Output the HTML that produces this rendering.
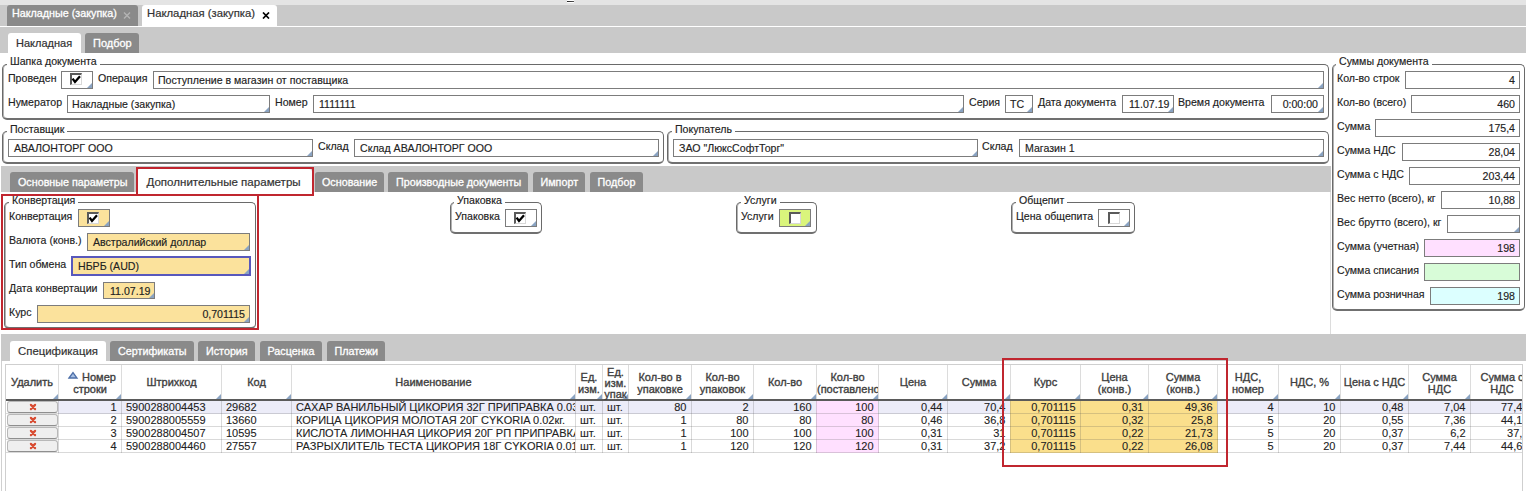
<!DOCTYPE html><html><head><meta charset="utf-8"><style>
html,body{margin:0;padding:0;background:#fff;}
body{width:1526px;height:491px;position:relative;overflow:hidden;font-family:"Liberation Sans",sans-serif;font-size:10.6px;color:#222;}
div,span,i{position:absolute;box-sizing:border-box;}
.t{white-space:nowrap;line-height:12px;-webkit-text-stroke:0.15px currentColor;}
.gt{white-space:nowrap;line-height:12px;background:#fff;color:#222;-webkit-text-stroke:0.15px currentColor;}
.grp{border:1px solid #6a6a6a;border-bottom:2px solid #707070;border-radius:5px;box-shadow:inset 1px 0 0 rgba(0,0,0,0.3);}
.inp{border:1px solid #7c7c7c;background:#fff;overflow:hidden;}
.it{white-space:nowrap;line-height:12px;top:2px;-webkit-text-stroke:0.15px currentColor;}
.tri{width:0;height:0;right:0;bottom:0;border-style:solid;border-width:0 0 5px 5px;border-color:transparent transparent #8aa3c2 transparent;}
.cbi{width:12px;height:12px;background:#fff;border-style:solid;border-width:2px 1px 1px 2px;border-color:#5a5a5a #d8d8d8 #d8d8d8 #5a5a5a;}
.cbi svg{left:-2px!important;top:-2px!important;}
.tabd{background:#8a8a8a;border-radius:3px 3px 0 0;}
.tabw{background:#fff;border-radius:3px 3px 0 0;}
.bar{background:#c9c9c9;}
.red{border:2px solid #c0262f;}
.tbl{font-size:11px;color:#222;}
.c{white-space:nowrap;line-height:12px;overflow:hidden;font-size:11px;-webkit-text-stroke:0.1px currentColor;}
.btn{background:#efefef;border:1px solid #b8b8b8;border-bottom:1px solid #8f8f8f;border-radius:3px;}
</style></head><body>

<div class="" style="left:0px;top:0px;width:1526px;height:5px;background:#e4e4e4;"></div>
<div class="" style="left:567px;top:0px;width:7px;height:1px;background:#fff;"></div>
<div class="" style="left:567px;top:1px;width:7px;height:1px;background:linear-gradient(90deg,#222,#555);"></div>
<div class="" style="left:567px;top:2px;width:7px;height:1px;background:#fff;"></div>
<div class="bar" style="left:0px;top:5px;width:1526px;height:21px;"></div>
<div class="" style="left:0px;top:26px;width:1526px;height:1px;background:#fff;"></div>
<div class="bar" style="left:0px;top:27px;width:1526px;height:26px;"></div>
<div class="tabd" style="left:7px;top:5px;width:131px;height:21px;"></div>
<div class="t" style="left:12px;top:7px;font-size:10.75px;color:#ffffff;-webkit-text-stroke:0.3px currentColor;">Накладные (закупка)</div>
<svg style="position:absolute;left:123px;top:12px" width="8" height="7"><path d="M1 0.5 L7 6.5 M7 0.5 L1 6.5" stroke="#b4b4b4" stroke-width="1.4"/></svg>
<div class="tabw" style="left:142px;top:5px;width:135px;height:21px;"></div>
<div class="t" style="left:147px;top:7px;font-size:11.3px;color:#333;-webkit-text-stroke:0.2px currentColor;">Накладная (закупка)</div>
<svg style="position:absolute;left:262px;top:12px" width="8" height="7"><path d="M1 0.5 L7 6.5 M7 0.5 L1 6.5" stroke="#000" stroke-width="1.7"/></svg>
<div class="tabw" style="left:8px;top:33px;width:73px;height:20px;"></div>
<div class="t" style="left:16px;top:37px;font-size:11px;color:#333;-webkit-text-stroke:0.2px currentColor;">Накладная</div>
<div class="tabd" style="left:85px;top:33px;width:54px;height:20px;"></div>
<div class="t" style="left:93px;top:37px;font-size:11px;color:#ffffff;-webkit-text-stroke:0.3px currentColor;">Подбор</div>
<div class="" style="left:1330px;top:192px;width:1px;height:142px;background:#dcdcdc;"></div>
<div class="grp" style="left:2px;top:64px;width:1327px;height:56px;"></div>
<div class="gt" style="left:7px;top:55px;padding:0 3px;">Шапка документа</div>
<div class="t" style="left:8px;top:72px;">Проведен</div>
<div class="inp" style="left:61px;top:71px;width:32px;height:18px;"><span class="cbi" style="left:8px;top:1px"><svg width="12" height="12" style="position:absolute;left:0;top:0"><path d="M2.6 5.6 L5 9 L10 3.2" stroke="#000" stroke-width="2.3" fill="none"/></svg></span><i class="tri"></i></div>
<div class="t" style="left:98px;top:72px;">Операция</div>
<div class="inp" style="left:153px;top:71px;width:1171px;height:18px;"><span class="it" style="text-align:left;left:4px;">Поступление в магазин от поставщика</span><i class="tri"></i></div>
<div class="t" style="left:8px;top:96px;">Нумератор</div>
<div class="inp" style="left:67px;top:95px;width:203px;height:18px;"><span class="it" style="text-align:left;left:4px;">Накладные (закупка)</span><i class="tri"></i></div>
<div class="t" style="left:275px;top:96px;">Номер</div>
<div class="inp" style="left:313px;top:95px;width:651px;height:18px;"><span class="it" style="text-align:left;left:5px;">1111111</span><i class="tri"></i></div>
<div class="t" style="left:969px;top:96px;">Серия</div>
<div class="inp" style="left:1005px;top:95px;width:28px;height:18px;"><span class="it" style="text-align:left;left:4px;">ТС</span><i class="tri"></i></div>
<div class="t" style="left:1038px;top:96px;">Дата документа</div>
<div class="inp" style="left:1122px;top:95px;width:52px;height:18px;"><span class="it" style="text-align:left;left:6px;">11.07.19</span><i class="tri"></i></div>
<div class="t" style="left:1178px;top:96px;">Время документа</div>
<div class="inp" style="left:1271px;top:95px;width:53px;height:18px;"><span class="it" style="text-align:right;right:5px;left:auto;">0:00:00</span><i class="tri"></i></div>
<div class="grp" style="left:2px;top:131px;width:662px;height:33px;"></div>
<div class="gt" style="left:7px;top:123px;padding:0 3px;">Поставщик</div>
<div class="inp" style="left:8px;top:139px;width:305px;height:18px;"><span class="it" style="text-align:left;left:5px;">АВАЛОНТОРГ ООО</span><i class="tri"></i></div>
<div class="t" style="left:318px;top:140px;">Склад</div>
<div class="inp" style="left:354px;top:139px;width:305px;height:18px;"><span class="it" style="text-align:left;left:5px;">Склад АВАЛОНТОРГ ООО</span><i class="tri"></i></div>
<div class="grp" style="left:667px;top:131px;width:662px;height:33px;"></div>
<div class="gt" style="left:672px;top:123px;padding:0 3px;">Покупатель</div>
<div class="inp" style="left:673px;top:139px;width:305px;height:18px;"><span class="it" style="text-align:left;left:5px;">ЗАО "ЛюксСофтТорг"</span><i class="tri"></i></div>
<div class="t" style="left:982px;top:140px;">Склад</div>
<div class="inp" style="left:1019px;top:139px;width:305px;height:18px;"><span class="it" style="text-align:left;left:5px;">Магазин 1</span><i class="tri"></i></div>
<div class="bar" style="left:1px;top:166px;width:1330px;height:26px;"></div>
<div class="tabd" style="left:10px;top:172px;width:124px;height:20px;"></div>
<div class="t" style="left:18px;top:176px;font-size:10.75px;color:#ffffff;-webkit-text-stroke:0.3px currentColor;">Основные параметры</div>
<div class="tabw" style="left:137px;top:169px;width:175px;height:26px;"></div>
<div class="t" style="left:146.5px;top:176px;font-size:11.55px;color:#333;-webkit-text-stroke:0.2px currentColor;">Дополнительные параметры</div>
<div class="tabd" style="left:315px;top:172px;width:69px;height:20px;"></div>
<div class="t" style="left:322px;top:176px;font-size:10.75px;color:#ffffff;-webkit-text-stroke:0.3px currentColor;">Основание</div>
<div class="tabd" style="left:388px;top:172px;width:140px;height:20px;"></div>
<div class="t" style="left:396px;top:176px;font-size:10.75px;color:#ffffff;-webkit-text-stroke:0.3px currentColor;">Производные документы</div>
<div class="tabd" style="left:532.5px;top:172px;width:52.5px;height:20px;"></div>
<div class="t" style="left:540.5px;top:176px;font-size:10.75px;color:#ffffff;-webkit-text-stroke:0.3px currentColor;">Импорт</div>
<div class="tabd" style="left:589.5px;top:172px;width:53.5px;height:20px;"></div>
<div class="t" style="left:597.5px;top:176px;font-size:10.75px;color:#ffffff;-webkit-text-stroke:0.3px currentColor;">Подбор</div>
<div class="grp" style="left:4px;top:202px;width:252px;height:127px;"></div>
<div class="gt" style="left:9px;top:194px;padding:0 3px;">Конвертация</div>
<div class="t" style="left:9px;top:210px;">Конвертация</div>
<div class="inp" style="left:78px;top:209px;width:32px;height:18px;background:#fbe29c;"><span class="cbi" style="left:8px;top:2px"><svg width="12" height="12" style="position:absolute;left:0;top:0"><path d="M2.6 5.6 L5 9 L10 3.2" stroke="#000" stroke-width="2.3" fill="none"/></svg></span><i class="tri"></i></div>
<div class="t" style="left:9px;top:234px;">Валюта (конв.)</div>
<div class="inp" style="left:87px;top:233px;width:163px;height:18px;background:#fbe29c;"><span class="it" style="text-align:left;left:5px;">Австралийский доллар</span><i class="tri"></i></div>
<div class="t" style="left:9px;top:258px;">Тип обмена</div>
<div class="inp" style="left:71px;top:256px;width:180px;height:20px;background:#fbe29c;border:2px solid #5858bc;"><span class="it" style="text-align:left;left:5px;">НБРБ (AUD)</span><i class="tri"></i></div>
<div class="t" style="left:9px;top:282px;">Дата конвертации</div>
<div class="inp" style="left:103px;top:282px;width:52px;height:17px;background:#fbe29c;"><span class="it" style="text-align:left;left:6px;">11.07.19</span><i class="tri"></i></div>
<div class="t" style="left:9px;top:306px;">Курс</div>
<div class="inp" style="left:37px;top:305px;width:213px;height:18px;background:#fbe29c;"><span class="it" style="text-align:right;right:4px;left:auto;">0,701115</span><i class="tri"></i></div>
<div class="red" style="left:1px;top:194px;width:258px;height:136px;"></div>
<div class="red" style="left:136px;top:167px;width:178px;height:29px;"></div>
<div class="grp" style="left:450px;top:202px;width:92px;height:32px;"></div>
<div class="gt" style="left:454px;top:194px;padding:0 3px;">Упаковка</div>
<div class="t" style="left:455px;top:210px;">Упаковка</div>
<div class="inp" style="left:505px;top:209px;width:32px;height:18px;"><span class="cbi" style="left:8px;top:2px"><svg width="12" height="12" style="position:absolute;left:0;top:0"><path d="M2.6 5.6 L5 9 L10 3.2" stroke="#000" stroke-width="2.3" fill="none"/></svg></span><i class="tri"></i></div>
<div class="grp" style="left:736px;top:202px;width:81px;height:32px;"></div>
<div class="gt" style="left:741px;top:194px;padding:0 3px;">Услуги</div>
<div class="t" style="left:741px;top:210px;">Услуги</div>
<div class="inp" style="left:779px;top:209px;width:32px;height:18px;background:#daf57c;"><span class="cbi" style="left:9px;top:2px"></span><i class="tri"></i></div>
<div class="grp" style="left:1011px;top:202px;width:124px;height:32px;"></div>
<div class="gt" style="left:1016px;top:194px;padding:0 3px;">Общепит</div>
<div class="t" style="left:1016px;top:210px;">Цена общепита</div>
<div class="inp" style="left:1098px;top:209px;width:32px;height:18px;"><span class="cbi" style="left:9px;top:2px"></span><i class="tri"></i></div>
<div class="grp" style="left:1332px;top:64px;width:193px;height:247px;"></div>
<div class="gt" style="left:1336px;top:55px;padding:0 3px;">Суммы документа</div>
<div class="t" style="left:1337px;top:72px;">Кол-во строк</div>
<div class="inp" style="left:1405px;top:71px;width:115px;height:18px;"><span class="it" style="text-align:right;right:4px;left:auto;">4</span></div>
<div class="t" style="left:1337px;top:96px;">Кол-во (всего)</div>
<div class="inp" style="left:1411px;top:95px;width:109px;height:18px;"><span class="it" style="text-align:right;right:4px;left:auto;">460</span></div>
<div class="t" style="left:1337px;top:120px;">Сумма</div>
<div class="inp" style="left:1375px;top:119px;width:145px;height:18px;"><span class="it" style="text-align:right;right:4px;left:auto;">175,4</span></div>
<div class="t" style="left:1337px;top:144px;">Сумма НДС</div>
<div class="inp" style="left:1402px;top:143px;width:118px;height:18px;"><span class="it" style="text-align:right;right:4px;left:auto;">28,04</span></div>
<div class="t" style="left:1337px;top:168px;">Сумма с НДС</div>
<div class="inp" style="left:1409px;top:167px;width:111px;height:18px;"><span class="it" style="text-align:right;right:4px;left:auto;">203,44</span></div>
<div class="t" style="left:1337px;top:192px;">Вес нетто (всего), кг</div>
<div class="inp" style="left:1441px;top:191px;width:79px;height:18px;"><span class="it" style="text-align:right;right:4px;left:auto;">10,88</span></div>
<div class="t" style="left:1337px;top:216px;">Вес брутто (всего), кг</div>
<div class="inp" style="left:1447px;top:215px;width:73px;height:18px;"><i class="tri"></i></div>
<div class="t" style="left:1337px;top:240px;">Сумма (учетная)</div>
<div class="inp" style="left:1424px;top:239px;width:96px;height:18px;background:#ffe0ff;"><span class="it" style="text-align:right;right:4px;left:auto;">198</span></div>
<div class="t" style="left:1337px;top:264px;">Сумма списания</div>
<div class="inp" style="left:1424px;top:263px;width:96px;height:18px;background:#d8fcd8;"></div>
<div class="t" style="left:1337px;top:288px;">Сумма розничная</div>
<div class="inp" style="left:1430px;top:287px;width:90px;height:18px;background:#dcffff;"><span class="it" style="text-align:right;right:4px;left:auto;">198</span></div>
<div class="bar" style="left:1px;top:334px;width:1525px;height:27px;"></div>
<div class="tabw" style="left:10px;top:341px;width:96px;height:20px;"></div>
<div class="t" style="left:18px;top:345px;font-size:11.4px;color:#333;-webkit-text-stroke:0.2px currentColor;">Спецификация</div>
<div class="tabd" style="left:110px;top:341px;width:84px;height:20px;"></div>
<div class="t" style="left:118px;top:345px;font-size:10.75px;color:#ffffff;-webkit-text-stroke:0.3px currentColor;">Сертификаты</div>
<div class="tabd" style="left:198px;top:341px;width:57px;height:20px;"></div>
<div class="t" style="left:206px;top:345px;font-size:10.75px;color:#ffffff;-webkit-text-stroke:0.3px currentColor;">История</div>
<div class="tabd" style="left:259.5px;top:341px;width:62.5px;height:20px;"></div>
<div class="t" style="left:267.5px;top:345px;font-size:10.75px;color:#ffffff;-webkit-text-stroke:0.3px currentColor;">Расценка</div>
<div class="tabd" style="left:326.5px;top:341px;width:58.5px;height:20px;"></div>
<div class="t" style="left:334.5px;top:345px;font-size:10.75px;color:#ffffff;-webkit-text-stroke:0.3px currentColor;">Платежи</div>
<div class="" style="left:1px;top:361px;width:1px;height:130px;background:#d0d0d0;"></div>
<div style="left:5px;top:364px;width:1518px;height:127px;overflow:hidden;border:1px solid #cfcfcf;border-bottom:none;background:#fff;">
<div style="left:52px;top:36px;width:64px;height:13px;background:#ececf8;"></div>
<div style="left:115px;top:36px;width:101px;height:13px;background:#ececf8;"></div>
<div style="left:215px;top:36px;width:71px;height:13px;background:#ececf8;"></div>
<div style="left:285px;top:36px;width:285px;height:13px;background:#ececf8;"></div>
<div style="left:569px;top:36px;width:28px;height:13px;background:#ececf8;"></div>
<div style="left:596px;top:36px;width:27px;height:13px;background:#ececf8;"></div>
<div style="left:622px;top:36px;width:64px;height:13px;background:#ececf8;"></div>
<div style="left:685px;top:36px;width:63px;height:13px;background:#ececf8;"></div>
<div style="left:747px;top:36px;width:64px;height:13px;background:#ececf8;"></div>
<div style="left:810px;top:36px;width:63px;height:13px;background:#ffe0ff;"></div>
<div style="left:872px;top:36px;width:70px;height:13px;background:#ececf8;"></div>
<div style="left:941px;top:36px;width:64px;height:13px;background:#ececf8;"></div>
<div style="left:1004px;top:36px;width:71px;height:13px;background:#fadf8c;"></div>
<div style="left:1074px;top:36px;width:69px;height:13px;background:#fadf8c;"></div>
<div style="left:1142px;top:36px;width:70px;height:13px;background:#fadf8c;"></div>
<div style="left:1211px;top:36px;width:62px;height:13px;background:#ececf8;"></div>
<div style="left:1272px;top:36px;width:63px;height:13px;background:#ececf8;"></div>
<div style="left:1334px;top:36px;width:69px;height:13px;background:#ececf8;"></div>
<div style="left:1402px;top:36px;width:63px;height:13px;background:#ececf8;"></div>
<div style="left:1464px;top:36px;width:64px;height:13px;background:#ececf8;"></div>
<div style="left:810px;top:49px;width:63px;height:13px;background:#ffe0ff;"></div>
<div style="left:1004px;top:49px;width:71px;height:13px;background:#fadf8c;"></div>
<div style="left:1074px;top:49px;width:69px;height:13px;background:#fadf8c;"></div>
<div style="left:1142px;top:49px;width:70px;height:13px;background:#fadf8c;"></div>
<div style="left:810px;top:62px;width:63px;height:13px;background:#ffe0ff;"></div>
<div style="left:1004px;top:62px;width:71px;height:13px;background:#fadf8c;"></div>
<div style="left:1074px;top:62px;width:69px;height:13px;background:#fadf8c;"></div>
<div style="left:1142px;top:62px;width:70px;height:13px;background:#fadf8c;"></div>
<div style="left:810px;top:75px;width:63px;height:13px;background:#ffe0ff;"></div>
<div style="left:1004px;top:75px;width:71px;height:13px;background:#fadf8c;"></div>
<div style="left:1074px;top:75px;width:69px;height:13px;background:#fadf8c;"></div>
<div style="left:1142px;top:75px;width:70px;height:13px;background:#fadf8c;"></div>
<div style="left:52px;top:0px;width:1px;height:34px;background:#dcdcdc;"></div>
<div style="left:52px;top:36px;width:1px;height:52px;background:rgba(80,80,80,0.22);"></div>
<div style="left:115px;top:0px;width:1px;height:34px;background:#dcdcdc;"></div>
<div style="left:115px;top:36px;width:1px;height:52px;background:rgba(80,80,80,0.22);"></div>
<div style="left:215px;top:0px;width:1px;height:34px;background:#dcdcdc;"></div>
<div style="left:215px;top:36px;width:1px;height:52px;background:rgba(80,80,80,0.22);"></div>
<div style="left:285px;top:0px;width:1px;height:34px;background:#dcdcdc;"></div>
<div style="left:285px;top:36px;width:1px;height:52px;background:rgba(80,80,80,0.22);"></div>
<div style="left:569px;top:0px;width:1px;height:34px;background:#dcdcdc;"></div>
<div style="left:569px;top:36px;width:1px;height:52px;background:rgba(80,80,80,0.22);"></div>
<div style="left:596px;top:0px;width:1px;height:34px;background:#dcdcdc;"></div>
<div style="left:596px;top:36px;width:1px;height:52px;background:rgba(80,80,80,0.22);"></div>
<div style="left:622px;top:0px;width:1px;height:34px;background:#dcdcdc;"></div>
<div style="left:622px;top:36px;width:1px;height:52px;background:rgba(80,80,80,0.22);"></div>
<div style="left:685px;top:0px;width:1px;height:34px;background:#dcdcdc;"></div>
<div style="left:685px;top:36px;width:1px;height:52px;background:rgba(80,80,80,0.22);"></div>
<div style="left:747px;top:0px;width:1px;height:34px;background:#dcdcdc;"></div>
<div style="left:747px;top:36px;width:1px;height:52px;background:rgba(80,80,80,0.22);"></div>
<div style="left:810px;top:0px;width:1px;height:34px;background:#dcdcdc;"></div>
<div style="left:810px;top:36px;width:1px;height:52px;background:rgba(80,80,80,0.22);"></div>
<div style="left:872px;top:0px;width:1px;height:34px;background:#dcdcdc;"></div>
<div style="left:872px;top:36px;width:1px;height:52px;background:rgba(80,80,80,0.22);"></div>
<div style="left:941px;top:0px;width:1px;height:34px;background:#dcdcdc;"></div>
<div style="left:941px;top:36px;width:1px;height:52px;background:rgba(80,80,80,0.22);"></div>
<div style="left:1004px;top:0px;width:1px;height:34px;background:#dcdcdc;"></div>
<div style="left:1004px;top:36px;width:1px;height:52px;background:rgba(80,80,80,0.22);"></div>
<div style="left:1074px;top:0px;width:1px;height:34px;background:#dcdcdc;"></div>
<div style="left:1074px;top:36px;width:1px;height:52px;background:rgba(80,80,80,0.22);"></div>
<div style="left:1142px;top:0px;width:1px;height:34px;background:#dcdcdc;"></div>
<div style="left:1142px;top:36px;width:1px;height:52px;background:rgba(80,80,80,0.22);"></div>
<div style="left:1211px;top:0px;width:1px;height:34px;background:#dcdcdc;"></div>
<div style="left:1211px;top:36px;width:1px;height:52px;background:rgba(80,80,80,0.22);"></div>
<div style="left:1272px;top:0px;width:1px;height:34px;background:#dcdcdc;"></div>
<div style="left:1272px;top:36px;width:1px;height:52px;background:rgba(80,80,80,0.22);"></div>
<div style="left:1334px;top:0px;width:1px;height:34px;background:#dcdcdc;"></div>
<div style="left:1334px;top:36px;width:1px;height:52px;background:rgba(80,80,80,0.22);"></div>
<div style="left:1402px;top:0px;width:1px;height:34px;background:#dcdcdc;"></div>
<div style="left:1402px;top:36px;width:1px;height:52px;background:rgba(80,80,80,0.22);"></div>
<div style="left:1464px;top:0px;width:1px;height:34px;background:#dcdcdc;"></div>
<div style="left:1464px;top:36px;width:1px;height:52px;background:rgba(80,80,80,0.22);"></div>
<div style="left:0px;top:48px;width:1530px;height:1px;background:rgba(80,80,80,0.22);"></div>
<div style="left:0px;top:61px;width:1530px;height:1px;background:rgba(80,80,80,0.22);"></div>
<div style="left:0px;top:74px;width:1530px;height:1px;background:rgba(80,80,80,0.22);"></div>
<div style="left:0px;top:87px;width:1530px;height:1px;background:rgba(80,80,80,0.22);"></div>
<div style="left:0px;top:34px;width:1530px;height:2px;background:#5a5a5a;"></div>
<i class="tri" style="left:47px;top:29px;right:auto;bottom:auto;"></i>
<i class="tri" style="left:110px;top:29px;right:auto;bottom:auto;"></i>
<i class="tri" style="left:210px;top:29px;right:auto;bottom:auto;"></i>
<i class="tri" style="left:280px;top:29px;right:auto;bottom:auto;"></i>
<i class="tri" style="left:564px;top:29px;right:auto;bottom:auto;"></i>
<i class="tri" style="left:591px;top:29px;right:auto;bottom:auto;"></i>
<i class="tri" style="left:617px;top:29px;right:auto;bottom:auto;"></i>
<i class="tri" style="left:680px;top:29px;right:auto;bottom:auto;"></i>
<i class="tri" style="left:742px;top:29px;right:auto;bottom:auto;"></i>
<i class="tri" style="left:805px;top:29px;right:auto;bottom:auto;"></i>
<i class="tri" style="left:867px;top:29px;right:auto;bottom:auto;"></i>
<i class="tri" style="left:936px;top:29px;right:auto;bottom:auto;"></i>
<i class="tri" style="left:999px;top:29px;right:auto;bottom:auto;"></i>
<i class="tri" style="left:1069px;top:29px;right:auto;bottom:auto;"></i>
<i class="tri" style="left:1137px;top:29px;right:auto;bottom:auto;"></i>
<i class="tri" style="left:1206px;top:29px;right:auto;bottom:auto;"></i>
<i class="tri" style="left:1267px;top:29px;right:auto;bottom:auto;"></i>
<i class="tri" style="left:1329px;top:29px;right:auto;bottom:auto;"></i>
<i class="tri" style="left:1397px;top:29px;right:auto;bottom:auto;"></i>
<i class="tri" style="left:1459px;top:29px;right:auto;bottom:auto;"></i>
<i class="tri" style="left:1522px;top:29px;right:auto;bottom:auto;"></i>
<div class="c" style="left:0px;top:11px;width:52px;text-align:center;color:#404040;-webkit-text-stroke:0.35px currentColor;">Удалить</div>
<div class="c" style="left:53px;top:6px;width:62px;text-align:center;color:#404040;-webkit-text-stroke:0.35px currentColor;"><svg width="10" height="8" style="position:relative;top:-2px;margin-right:4px;margin-left:4px;overflow:visible"><path d="M1 7 L5 1.5 L9 7 Z" fill="#a8c0e4" stroke="#4d6fa8" stroke-width="1.3"/></svg>Номер</div>
<div class="c" style="left:53px;top:18px;width:62px;text-align:center;color:#404040;-webkit-text-stroke:0.35px currentColor;">строки</div>
<div class="c" style="left:116px;top:11px;width:99px;text-align:center;color:#404040;-webkit-text-stroke:0.35px currentColor;">Штрихкод</div>
<div class="c" style="left:216px;top:11px;width:69px;text-align:center;color:#404040;-webkit-text-stroke:0.35px currentColor;">Код</div>
<div class="c" style="left:286px;top:11px;width:283px;text-align:center;color:#404040;-webkit-text-stroke:0.35px currentColor;">Наименование</div>
<div class="c" style="left:570px;top:6px;width:26px;text-align:center;color:#404040;-webkit-text-stroke:0.35px currentColor;">Ед.</div>
<div class="c" style="left:570px;top:18px;width:26px;text-align:center;color:#404040;-webkit-text-stroke:0.35px currentColor;">изм.</div>
<div class="c" style="left:597px;top:1px;width:25px;text-align:center;color:#404040;-webkit-text-stroke:0.35px currentColor;">Ед.</div>
<div class="c" style="left:597px;top:12px;width:25px;text-align:center;color:#404040;-webkit-text-stroke:0.35px currentColor;">изм.</div>
<div class="c" style="left:597px;top:23px;width:25px;text-align:center;color:#404040;-webkit-text-stroke:0.35px currentColor;">упак</div>
<div class="c" style="left:623px;top:6px;width:62px;text-align:center;color:#404040;-webkit-text-stroke:0.35px currentColor;">Кол-во в</div>
<div class="c" style="left:623px;top:18px;width:62px;text-align:center;color:#404040;-webkit-text-stroke:0.35px currentColor;">упаковке</div>
<div class="c" style="left:686px;top:6px;width:61px;text-align:center;color:#404040;-webkit-text-stroke:0.35px currentColor;">Кол-во</div>
<div class="c" style="left:686px;top:18px;width:61px;text-align:center;color:#404040;-webkit-text-stroke:0.35px currentColor;">упаковок</div>
<div class="c" style="left:748px;top:11px;width:62px;text-align:center;color:#404040;-webkit-text-stroke:0.35px currentColor;">Кол-во</div>
<div class="c" style="left:811px;top:6px;width:61px;text-align:center;color:#404040;-webkit-text-stroke:0.35px currentColor;">Кол-во</div>
<div class="c" style="left:811px;top:18px;width:61px;text-align:center;color:#404040;-webkit-text-stroke:0.35px currentColor;">(поставлено)</div>
<div class="c" style="left:873px;top:11px;width:68px;text-align:center;color:#404040;-webkit-text-stroke:0.35px currentColor;">Цена</div>
<div class="c" style="left:942px;top:11px;width:62px;text-align:center;color:#404040;-webkit-text-stroke:0.35px currentColor;">Сумма</div>
<div class="c" style="left:1005px;top:11px;width:69px;text-align:center;color:#404040;-webkit-text-stroke:0.35px currentColor;">Курс</div>
<div class="c" style="left:1075px;top:6px;width:67px;text-align:center;color:#404040;-webkit-text-stroke:0.35px currentColor;">Цена</div>
<div class="c" style="left:1075px;top:18px;width:67px;text-align:center;color:#404040;-webkit-text-stroke:0.35px currentColor;">(конв.)</div>
<div class="c" style="left:1143px;top:6px;width:68px;text-align:center;color:#404040;-webkit-text-stroke:0.35px currentColor;">Сумма</div>
<div class="c" style="left:1143px;top:18px;width:68px;text-align:center;color:#404040;-webkit-text-stroke:0.35px currentColor;">(конв.)</div>
<div class="c" style="left:1212px;top:6px;width:60px;text-align:center;color:#404040;-webkit-text-stroke:0.35px currentColor;">НДС,</div>
<div class="c" style="left:1212px;top:18px;width:60px;text-align:center;color:#404040;-webkit-text-stroke:0.35px currentColor;">номер</div>
<div class="c" style="left:1273px;top:11px;width:61px;text-align:center;color:#404040;-webkit-text-stroke:0.35px currentColor;">НДС, %</div>
<div class="c" style="left:1335px;top:11px;width:67px;text-align:center;color:#404040;-webkit-text-stroke:0.35px currentColor;">Цена с НДС</div>
<div class="c" style="left:1403px;top:6px;width:61px;text-align:center;color:#404040;-webkit-text-stroke:0.35px currentColor;">Сумма</div>
<div class="c" style="left:1403px;top:18px;width:61px;text-align:center;color:#404040;-webkit-text-stroke:0.35px currentColor;">НДС</div>
<div class="c" style="left:1465px;top:6px;width:62px;text-align:center;color:#404040;-webkit-text-stroke:0.35px currentColor;">Сумма с</div>
<div class="c" style="left:1465px;top:18px;width:62px;text-align:center;color:#404040;-webkit-text-stroke:0.35px currentColor;">НДС</div>
<div class="btn" style="left:1px;top:36px;width:51px;height:12px;"><svg width="8" height="8" style="position:absolute;left:20.5px;top:0.5px"><path d="M1.9 1.9 L6.1 6.1 M6.1 1.9 L1.9 6.1" stroke="#d84c32" stroke-width="2.2" stroke-linecap="round"/></svg></div>
<div class="c" style="left:52px;top:36px;width:58.5px;text-align:right;">1</div>
<div class="c" style="left:120px;top:36px;width:95px;text-align:left;">5900288004453</div>
<div class="c" style="left:220px;top:36px;width:65px;text-align:left;">29682</div>
<div class="c" style="left:290px;top:36px;width:279px;text-align:left;">САХАР ВАНИЛЬНЫЙ ЦИКОРИЯ 32Г ПРИПРАВКА 0.03кг.</div>
<div class="c" style="left:574px;top:36px;width:22px;text-align:left;">шт.</div>
<div class="c" style="left:601px;top:36px;width:21px;text-align:left;">шт.</div>
<div class="c" style="left:622px;top:36px;width:58.5px;text-align:right;">80</div>
<div class="c" style="left:685px;top:36px;width:57.5px;text-align:right;">2</div>
<div class="c" style="left:747px;top:36px;width:58.5px;text-align:right;">160</div>
<div class="c" style="left:810px;top:36px;width:57.5px;text-align:right;">100</div>
<div class="c" style="left:872px;top:36px;width:64.5px;text-align:right;">0,44</div>
<div class="c" style="left:941px;top:36px;width:58.5px;text-align:right;">70,4</div>
<div class="c" style="left:1004px;top:36px;width:65.5px;text-align:right;">0,701115</div>
<div class="c" style="left:1074px;top:36px;width:63.5px;text-align:right;">0,31</div>
<div class="c" style="left:1142px;top:36px;width:64.5px;text-align:right;">49,36</div>
<div class="c" style="left:1211px;top:36px;width:56.5px;text-align:right;">4</div>
<div class="c" style="left:1272px;top:36px;width:57.5px;text-align:right;">10</div>
<div class="c" style="left:1334px;top:36px;width:63.5px;text-align:right;">0,48</div>
<div class="c" style="left:1402px;top:36px;width:57.5px;text-align:right;">7,04</div>
<div class="c" style="left:1464px;top:36px;width:58.5px;text-align:right;">77,44</div>
<div class="btn" style="left:1px;top:49px;width:51px;height:12px;"><svg width="8" height="8" style="position:absolute;left:20.5px;top:0.5px"><path d="M1.9 1.9 L6.1 6.1 M6.1 1.9 L1.9 6.1" stroke="#d84c32" stroke-width="2.2" stroke-linecap="round"/></svg></div>
<div class="c" style="left:52px;top:49px;width:58.5px;text-align:right;">2</div>
<div class="c" style="left:120px;top:49px;width:95px;text-align:left;">5900288005559</div>
<div class="c" style="left:220px;top:49px;width:65px;text-align:left;">13660</div>
<div class="c" style="left:290px;top:49px;width:279px;text-align:left;">КОРИЦА ЦИКОРИЯ МОЛОТАЯ 20Г CYKORIA 0.02кг.</div>
<div class="c" style="left:574px;top:49px;width:22px;text-align:left;">шт.</div>
<div class="c" style="left:601px;top:49px;width:21px;text-align:left;">шт.</div>
<div class="c" style="left:622px;top:49px;width:58.5px;text-align:right;">1</div>
<div class="c" style="left:685px;top:49px;width:57.5px;text-align:right;">80</div>
<div class="c" style="left:747px;top:49px;width:58.5px;text-align:right;">80</div>
<div class="c" style="left:810px;top:49px;width:57.5px;text-align:right;">80</div>
<div class="c" style="left:872px;top:49px;width:64.5px;text-align:right;">0,46</div>
<div class="c" style="left:941px;top:49px;width:58.5px;text-align:right;">36,8</div>
<div class="c" style="left:1004px;top:49px;width:65.5px;text-align:right;">0,701115</div>
<div class="c" style="left:1074px;top:49px;width:63.5px;text-align:right;">0,32</div>
<div class="c" style="left:1142px;top:49px;width:64.5px;text-align:right;">25,8</div>
<div class="c" style="left:1211px;top:49px;width:56.5px;text-align:right;">5</div>
<div class="c" style="left:1272px;top:49px;width:57.5px;text-align:right;">20</div>
<div class="c" style="left:1334px;top:49px;width:63.5px;text-align:right;">0,55</div>
<div class="c" style="left:1402px;top:49px;width:57.5px;text-align:right;">7,36</div>
<div class="c" style="left:1464px;top:49px;width:58.5px;text-align:right;">44,16</div>
<div class="btn" style="left:1px;top:62px;width:51px;height:12px;"><svg width="8" height="8" style="position:absolute;left:20.5px;top:0.5px"><path d="M1.9 1.9 L6.1 6.1 M6.1 1.9 L1.9 6.1" stroke="#d84c32" stroke-width="2.2" stroke-linecap="round"/></svg></div>
<div class="c" style="left:52px;top:62px;width:58.5px;text-align:right;">3</div>
<div class="c" style="left:120px;top:62px;width:95px;text-align:left;">5900288004507</div>
<div class="c" style="left:220px;top:62px;width:65px;text-align:left;">10595</div>
<div class="c" style="left:290px;top:62px;width:279px;text-align:left;">КИСЛОТА ЛИМОННАЯ ЦИКОРИЯ 20Г РП ПРИПРАВКА</div>
<div class="c" style="left:574px;top:62px;width:22px;text-align:left;">шт.</div>
<div class="c" style="left:601px;top:62px;width:21px;text-align:left;">шт.</div>
<div class="c" style="left:622px;top:62px;width:58.5px;text-align:right;">1</div>
<div class="c" style="left:685px;top:62px;width:57.5px;text-align:right;">100</div>
<div class="c" style="left:747px;top:62px;width:58.5px;text-align:right;">100</div>
<div class="c" style="left:810px;top:62px;width:57.5px;text-align:right;">100</div>
<div class="c" style="left:872px;top:62px;width:64.5px;text-align:right;">0,31</div>
<div class="c" style="left:941px;top:62px;width:58.5px;text-align:right;">31</div>
<div class="c" style="left:1004px;top:62px;width:65.5px;text-align:right;">0,701115</div>
<div class="c" style="left:1074px;top:62px;width:63.5px;text-align:right;">0,22</div>
<div class="c" style="left:1142px;top:62px;width:64.5px;text-align:right;">21,73</div>
<div class="c" style="left:1211px;top:62px;width:56.5px;text-align:right;">5</div>
<div class="c" style="left:1272px;top:62px;width:57.5px;text-align:right;">20</div>
<div class="c" style="left:1334px;top:62px;width:63.5px;text-align:right;">0,37</div>
<div class="c" style="left:1402px;top:62px;width:57.5px;text-align:right;">6,2</div>
<div class="c" style="left:1464px;top:62px;width:58.5px;text-align:right;">37,2</div>
<div class="btn" style="left:1px;top:75px;width:51px;height:12px;"><svg width="8" height="8" style="position:absolute;left:20.5px;top:0.5px"><path d="M1.9 1.9 L6.1 6.1 M6.1 1.9 L1.9 6.1" stroke="#d84c32" stroke-width="2.2" stroke-linecap="round"/></svg></div>
<div class="c" style="left:52px;top:75px;width:58.5px;text-align:right;">4</div>
<div class="c" style="left:120px;top:75px;width:95px;text-align:left;">5900288004460</div>
<div class="c" style="left:220px;top:75px;width:65px;text-align:left;">27557</div>
<div class="c" style="left:290px;top:75px;width:279px;text-align:left;">РАЗРЫХЛИТЕЛЬ ТЕСТА ЦИКОРИЯ 18Г CYKORIA 0.01кг.</div>
<div class="c" style="left:574px;top:75px;width:22px;text-align:left;">шт.</div>
<div class="c" style="left:601px;top:75px;width:21px;text-align:left;">шт.</div>
<div class="c" style="left:622px;top:75px;width:58.5px;text-align:right;">1</div>
<div class="c" style="left:685px;top:75px;width:57.5px;text-align:right;">120</div>
<div class="c" style="left:747px;top:75px;width:58.5px;text-align:right;">120</div>
<div class="c" style="left:810px;top:75px;width:57.5px;text-align:right;">120</div>
<div class="c" style="left:872px;top:75px;width:64.5px;text-align:right;">0,31</div>
<div class="c" style="left:941px;top:75px;width:58.5px;text-align:right;">37,2</div>
<div class="c" style="left:1004px;top:75px;width:65.5px;text-align:right;">0,701115</div>
<div class="c" style="left:1074px;top:75px;width:63.5px;text-align:right;">0,22</div>
<div class="c" style="left:1142px;top:75px;width:64.5px;text-align:right;">26,08</div>
<div class="c" style="left:1211px;top:75px;width:56.5px;text-align:right;">5</div>
<div class="c" style="left:1272px;top:75px;width:57.5px;text-align:right;">20</div>
<div class="c" style="left:1334px;top:75px;width:63.5px;text-align:right;">0,37</div>
<div class="c" style="left:1402px;top:75px;width:57.5px;text-align:right;">7,44</div>
<div class="c" style="left:1464px;top:75px;width:58.5px;text-align:right;">44,64</div>
</div>
<div class="red" style="left:1002px;top:358px;width:226px;height:109px;"></div>
</body></html>
